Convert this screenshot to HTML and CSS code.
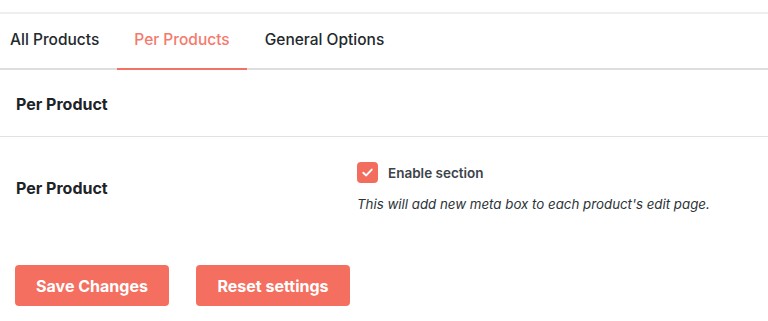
FILE: index.html
```html
<!DOCTYPE html>
<html lang="en">
<head>
  <meta charset="UTF-8" />
  <meta name="viewport" content="width=device-width, initial-scale=1.0"/>
  <title>Per Products</title>
  <link rel="stylesheet" href="styles.css">
</head>
<body>

  <div class="settings-wrap">
    <!-- Tabs -->
    <nav class="tabs">
      <a href="#" class="tab">All Products</a>
      <a href="#" class="tab active">Per Products</a>
      <a href="#" class="tab">General Options</a>
    </nav>

    <div class="section-head">
      <h2>Per Product</h2>
    </div>

    <div class="form-row">
      <div class="row-label">Per Product</div>
      <div class="row-field">
        <label class="check">
          <span class="check-box">
            <svg viewBox="0 0 20 20" width="13" height="13">
              <path d="M3.5 10.5 L8 14.5 L16.5 5.5" fill="none" stroke="#fff" stroke-width="3" stroke-linecap="round" stroke-linejoin="round"/>
            </svg>
          </span>
          <span class="check-text">Enable section</span>
        </label>
        <p class="field-desc">This will add new meta box to each product's edit page.</p>
      </div>
    </div>

    <div class="actions">
      <button class="btn">Save Changes</button>
      <button class="btn">Reset settings</button>
    </div>
  </div>

</body>
</html>
```

FILE: styles.css
```css
* {
  box-sizing: border-box;
  margin: 0;
  padding: 0;
}

body {
  font-family: Inter, "Noto Sans", sans-serif;
  background: #fff;
  color: #1e1e1e;
  padding-top: 12px;
}

.settings-wrap {
  border-top: 2px solid #eeeeee;
}

.tabs {
  display: flex;
  height: 56px;
  border-bottom: 2px solid #dedede;
}

.tab {
  display: flex;
  align-items: center;
  padding: 0 17.5px 4px 17.5px;
  font-size: 15.5px;
  font-weight: 500;
  color: #23282d;
  text-decoration: none;
  margin-bottom: -2px;
  border-bottom: 2px solid transparent;
}

.tab:first-child {
  padding-left: 10px;
}

.tab.active {
  color: #f47a6d;
  border-bottom-color: #f27263;
}

.section-head {
  height: 67px;
  display: flex;
  align-items: center;
  padding: 0 16px 0 16px;
  border-bottom: 1px solid #e2e2e2;
}

.section-head h2 {
  font-size: 16px;
  font-weight: 700;
  color: #1d2327;
  padding-top: 2px;
}

.form-row {
  display: flex;
  padding: 25px 16px 0 16px;
}

.row-label {
  width: 341px;
  font-size: 16px;
  font-weight: 700;
  color: #1d2327;
  padding-top: 16px;
}

.row-field {
  display: flex;
  flex-direction: column;
  gap: 13px;
}

.check {
  display: flex;
  align-items: center;
  gap: 10px;
}

.check-box {
  width: 21px;
  height: 21px;
  border-radius: 4px;
  background: #f36d5f;
  display: flex;
  align-items: center;
  justify-content: center;
}

.check-text {
  font-size: 13.5px;
  font-weight: 600;
  color: #3c434a;
  padding-top: 1px;
}

.field-desc {
  font-size: 13.3px;
  font-style: italic;
  color: #2c3338;
}

.actions {
  display: flex;
  gap: 27px;
  padding: 53px 15px 0 15px;
}

.btn {
  font-family: Inter, "Noto Sans", sans-serif;
  width: 154px;
  height: 41px;
  border: none;
  border-radius: 4px;
  background: #f46f5f;
  color: #fff;
  font-size: 16px;
  font-weight: 700;
  cursor: pointer;
}
```
